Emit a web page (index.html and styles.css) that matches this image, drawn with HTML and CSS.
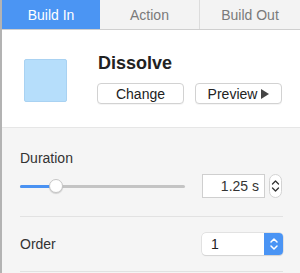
FILE: index.html
```html
<!DOCTYPE html>
<html>
<head>
<meta charset="utf-8">
<link rel="stylesheet" href="styles.css">
</head>
<body>
<div class="panel">
  <div class="tabs">
    <div class="tab active">Build In</div>
    <div class="tab">Action</div>
    <div class="tab">Build Out</div>
  </div>
  <div class="effect">
    <div class="thumb"></div>
    <div class="effect-info">
      <div class="effect-name">Dissolve</div>
      <div class="buttons">
        <div class="btn btn-change">Change</div>
        <div class="btn btn-preview">Preview <span class="play"></span></div>
      </div>
    </div>
  </div>
  <div class="settings">
    <div class="group">
      <div class="label">Duration</div>
      <div class="duration-row">
        <div class="slider">
          <div class="track"><div class="fill"></div></div>
          <div class="knob"></div>
        </div>
        <div class="field">1.25 s</div>
        <div class="stepper">
          <svg width="9" height="16" viewBox="0 0 9 16"><path d="M1.5 6 L4.5 3 L7.5 6 M1.5 10 L4.5 13 L7.5 10" fill="none" stroke="#333" stroke-width="1.3" stroke-linecap="round" stroke-linejoin="round"/></svg>
        </div>
      </div>
    </div>
    <div class="group order">
      <div class="label">Order</div>
      <div class="popup">
        <div class="popup-value">1</div>
        <div class="popup-arrows">
          <svg width="10" height="16" viewBox="0 0 10 16"><path d="M2 6 L5 3 L8 6 M2 10 L5 13 L8 10" fill="none" stroke="#fff" stroke-width="1.5" stroke-linecap="round" stroke-linejoin="round"/></svg>
        </div>
      </div>
    </div>
  </div>
</div>
</body>
</html>
```

FILE: styles.css
```css
* { box-sizing: border-box; }
html, body { margin: 0; padding: 0; }
body {
  width: 300px;
  height: 273px;
  overflow: hidden;
  background: #f5f5f5;
  font-family: "Liberation Sans", Arial, sans-serif;
  color: #333;
}
.panel {
  border-left: 2px solid #b3b3b3;
  height: 273px;
  background: #f5f5f5;
}
.tabs {
  display: flex;
  height: 30px;
  background: #f3f3f3;
  border-bottom: 1px solid #cfcfcf;
}
.tab {
  flex: 0 0 auto;
  display: flex;
  align-items: center;
  justify-content: center;
  font-size: 14px;
  color: #7a7a7a;
}
.tab:nth-child(1) { width: 98px; }
.tab:nth-child(2) { width: 100px; border-right: 1px solid #dcdcdc; }
.tab:nth-child(3) { width: 100px; }
.tab.active {
  background: #4b95f3;
  color: #fff;
}
.effect {
  display: flex;
  align-items: flex-start;
  background: #fff;
  height: 98px;
  border-bottom: 1px solid #e6e6e6;
  padding: 22px 0 0 22px;
}
.thumb {
  width: 43px;
  height: 43px;
  background: #b6defb;
  border: 1px solid #a9d2f2;
  border-radius: 2px;
  margin-top: 7px;
}
.effect-info {
  margin-left: 30px;
  display: flex;
  flex-direction: column;
}
.effect-name {
  font-size: 18px;
  font-weight: bold;
  color: #222;
  height: 31px;
  line-height: 20px;
  padding-top: 1px;
  padding-left: 1px;
}
.buttons {
  display: flex;
  gap: 11px;
}
.btn {
  height: 21px;
  border: 1px solid #d2d2d2;
  border-radius: 4px;
  background: #fff;
  font-size: 14px;
  color: #222;
  display: flex;
  align-items: center;
  justify-content: center;
  box-shadow: 0 1px 0 rgba(0,0,0,0.04);
}
.btn-change { width: 87px; }
.btn-preview { width: 87px; gap: 4px; }
.play {
  width: 0; height: 0;
  border-left: 8px solid #444;
  border-top: 5px solid transparent;
  border-bottom: 5px solid transparent;
}
.settings {
  padding: 0 17px 0 18px;
}
.group {
  border-bottom: 1px solid #e2e2e2;
}
.group:first-child {
  padding-top: 22px;
  height: 89px;
}
.label {
  font-size: 14px;
  color: #333;
}
.duration-row {
  display: flex;
  align-items: center;
  margin-top: 8px;
}
.slider {
  position: relative;
  width: 165px;
  height: 24px;
  display: flex;
  align-items: center;
}
.track {
  width: 100%;
  height: 3px;
  background: #c4c4c4;
  border-radius: 2px;
  overflow: hidden;
}
.fill {
  width: 36px;
  height: 100%;
  background: #4a92f2;
}
.knob {
  position: absolute;
  left: 29px;
  top: 5px;
  width: 14px;
  height: 14px;
  border-radius: 50%;
  background: #fff;
  border: 1px solid #c6c6c6;
  box-shadow: 0 1px 1px rgba(0,0,0,0.15);
}
.field {
  margin-left: 17px;
  width: 63px;
  height: 24px;
  background: #fff;
  border: 1px solid #cfcfcf;
  font-size: 14px;
  color: #333;
  display: flex;
  align-items: center;
  justify-content: flex-end;
  padding-right: 5px;
}
.stepper {
  margin-left: 4px;
  width: 13px;
  height: 24px;
  border: 1px solid #d3d3d3;
  border-radius: 7px;
  background: #fff;
  display: flex;
  align-items: center;
  justify-content: center;
}
.order {
  display: flex;
  align-items: center;
  justify-content: space-between;
  height: 55px;
}
.popup {
  display: flex;
  width: 81px;
  height: 22px;
  border-radius: 4px;
  background: #fff;
  box-shadow: 0 0 0 0.5px #cfcfcf, 0 1px 1px rgba(0,0,0,0.12);
  overflow: hidden;
}
.popup-value {
  flex: 1;
  font-size: 14px;
  color: #222;
  padding-left: 9px;
  display: flex;
  align-items: center;
}
.popup-arrows {
  width: 19px;
  background: #4a94f4;
  display: flex;
  align-items: center;
  justify-content: center;
}
```
